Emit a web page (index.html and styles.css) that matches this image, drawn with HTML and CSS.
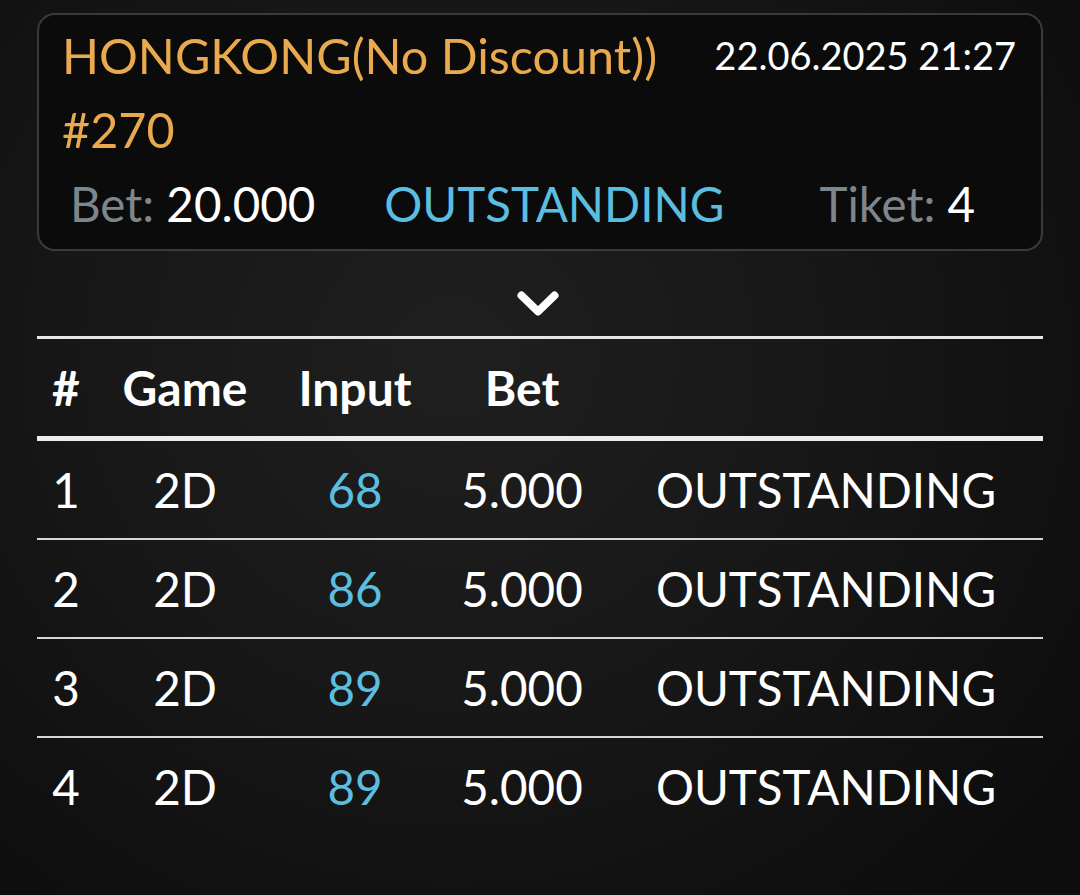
FILE: index.html
```html
<!DOCTYPE html>
<html>
<head>
<meta charset="utf-8">
<link rel="stylesheet" href="styles.css">
</head>
<body>
<div class="page">
  <div class="card">
    <div class="card-head">
      <div class="title">
        <div class="line">HONGKONG(No Discount))</div>
        <div class="line">#270</div>
      </div>
      <div class="date">22.06.2025 21:27</div>
    </div>
    <div class="card-row">
      <div class="item"><span class="label">Bet:</span> <span class="val">20.000</span></div>
      <div class="item status">OUTSTANDING</div>
      <div class="item tiket"><span class="label">Tiket:</span> <span class="val">4</span></div>
    </div>
  </div>
  <div class="toggle">
    <svg width="42" height="26" viewBox="0 0 42 26"><path d="M4.5 4.5 L21 20.5 L37.5 4.5" fill="none" stroke="#fff" stroke-width="8" stroke-linecap="round" stroke-linejoin="round"/></svg>
  </div>
  <div class="table">
    <div class="tr th">
      <div class="c">#</div><div class="c">Game</div><div class="c">Input</div><div class="c">Bet</div><div class="c"></div>
    </div>
    <div class="tr">
      <div class="c">1</div><div class="c">2D</div><div class="c num">68</div><div class="c">5.000</div><div class="c">OUTSTANDING</div>
    </div>
    <div class="tr">
      <div class="c">2</div><div class="c">2D</div><div class="c num">86</div><div class="c">5.000</div><div class="c">OUTSTANDING</div>
    </div>
    <div class="tr">
      <div class="c">3</div><div class="c">2D</div><div class="c num">89</div><div class="c">5.000</div><div class="c">OUTSTANDING</div>
    </div>
    <div class="tr last">
      <div class="c">4</div><div class="c">2D</div><div class="c num">89</div><div class="c">5.000</div><div class="c">OUTSTANDING</div>
    </div>
  </div>
</div>
</body>
</html>
```
FILE: styles.css
```css
html, body {
  margin: 0;
  height: 100%;
}
body {
  background: radial-gradient(ellipse 70% 80% at 42% 40%, #1f1f1f 0%, #181818 45%, #0d0d0d 100%);
  font-family: Lato, "Noto Sans", sans-serif;
  color: #fff;
}
.page {
  padding: 13px 37px 0 37px;
}
.card {
  border: 2px solid #3a3a3a;
  border-radius: 18px;
  background: #0b0b0b;
  padding: 3px 25px 9px 23px;
}
.card-head {
  display: flex;
  justify-content: space-between;
  align-items: flex-start;
}
.title {
  color: #e9a94f;
  font-size: 48.5px;
  line-height: 74px;
}
.date {
  font-size: 38px;
  line-height: 74px;
}
.card-row {
  display: flex;
  font-size: 47.5px;
  line-height: 74px;
  padding-left: 8px;
  margin-top: 1px;
  margin-bottom: -1px;
}
.label {
  color: #7e868d;
}
.status {
  color: #5bbddf;
  margin-left: 69px;
}
.tiket {
  margin-left: 95px;
}
.toggle {
  display: flex;
  justify-content: center;
  padding: 40px 0 19px 0;
  margin-left: -4px;
}
.toggle svg {
  display: block;
}
.table {
  border-top: 3px solid #e6e6e6;
}
.tr {
  display: grid;
  grid-template-columns: 58px 180px 160px 174px 434px;
  height: 97px;
  line-height: 97px;
  font-size: 47.5px;
  border-bottom: 2px solid #d6d6d6;
}
.tr.th {
  font-weight: 700;
  font-size: 48px;
  border-bottom: 5px solid #ececef;
}
.tr.last {
  border-bottom: none;
}
.c {
  text-align: center;
  white-space: nowrap;
}
.num {
  color: #5bbddf;
}
```
